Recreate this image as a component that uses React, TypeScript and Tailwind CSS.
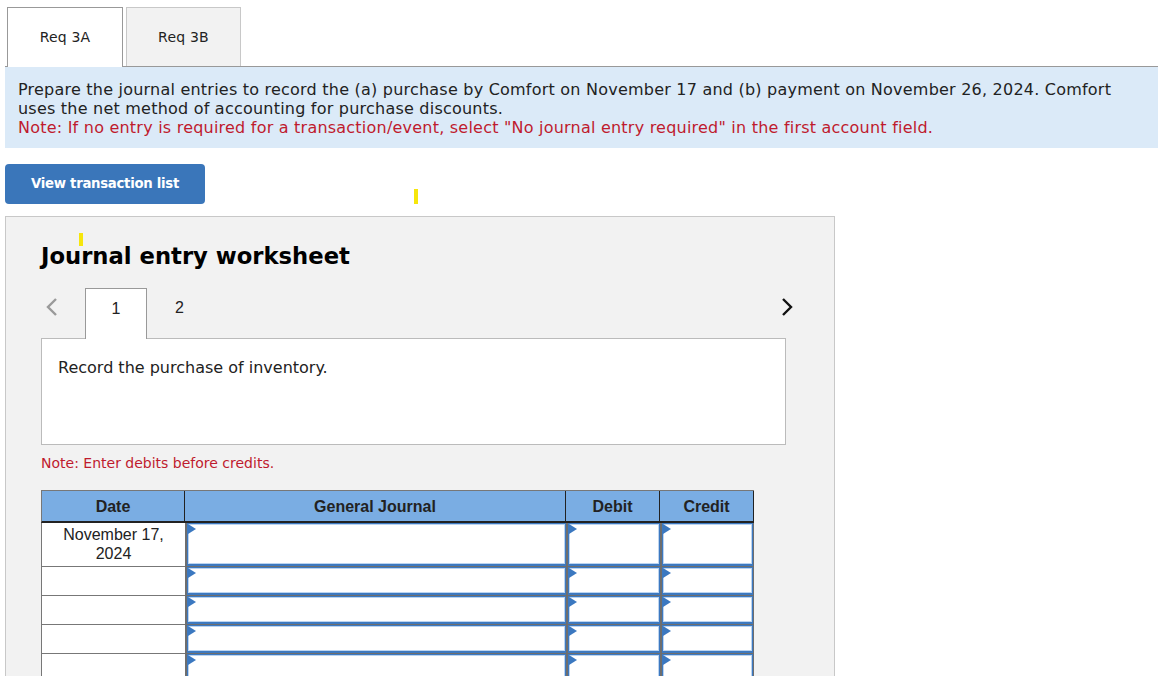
import React from "react";

const Tri = () => (
  <svg className="absolute left-0 top-0" width="8" height="10" viewBox="0 0 8 10">
    <polygon points="0,0 8,5 0,10" fill="#3b78c0" />
  </svg>
);

const InputCell = ({ last }: { last?: boolean }) => (
  <div
    className={`bg-white border-l-2 border-l-[#6e6e6e] border-b border-b-[#6e6e6e] p-0 ${last ? "border-r border-r-[#6e6e6e]" : ""}`}
  >
    <div className="relative h-full border border-[#3d79c0] border-b-2 shadow-[inset_0_0_0_1px_#bcd4f0] bg-white">
      <Tri />
    </div>
  </div>
);

const Row = ({ h, date }: { h: string; date?: React.ReactNode }) => (
  <div className={`grid grid-cols-[144px_381px_94px_94px] ${h}`}>
    <div className="bg-white border-l border-b border-[#777] text-center text-[16px] leading-[19px] pt-[2px] text-[#222] font-['Liberation_Sans',Arial,sans-serif]">
      {date}
    </div>
    <InputCell />
    <InputCell />
    <InputCell last />
  </div>
);

export default function App() {
  return (
    <div className="relative w-[1163px] h-[676px] overflow-hidden bg-white font-['DejaVu_Sans',Verdana,sans-serif] text-[#222]">
      <div className="mx-[5px]">
        {/* Req tabs */}
        <div className="flex items-end pl-[2px] pt-[7px] border-b border-[#999]">
          <div className="relative z-10 -mb-px w-[116px] h-[60px] bg-white border border-[#999] border-b-0 flex items-center justify-center text-[14px] tracking-[0.2px]">
            Req 3A
          </div>
          <div className="ml-[3px] w-[115px] h-[59px] bg-[#f2f2f2] border border-[#c8c8c8] border-b-0 flex items-center justify-center text-[14px] tracking-[0.2px]">
            Req 3B
          </div>
        </div>

        {/* instructions */}
        <div className="bg-[#dbeaf8] px-[13px] pt-[13px] pb-[11px] text-[16px] leading-[19px] tracking-[0.22px]">
          <p>
            Prepare the journal entries to record the (a) purchase by Comfort on November 17 and (b) payment on November 26, 2024. Comfort
            <br />
            uses the net method of accounting for purchase discounts.
          </p>
          <p className="text-[#bf1b2e]">
            Note: If no entry is required for a transaction/event, select "No journal entry required" in the first account field.
          </p>
        </div>

        {/* button */}
        <button className="mt-[16px] w-[200px] h-[40px] rounded-[4px] bg-[#3a76ba] text-white font-bold text-[13.3px] tracking-[-0.3px]">
          View transaction list
        </button>

        {/* worksheet panel */}
        <div className="mt-[12px] w-[830px] h-[480px] bg-[#f2f2f2] border border-[#c8c8c8] pl-[35px] pr-[40px] pt-[25px]">
          <h2 className="text-[22.7px] leading-[28px] font-bold text-black">Journal entry worksheet</h2>

          <div className="mt-[18px] flex items-start justify-between">
            <div className="flex items-start">
              <div className="w-[44px] pt-[9px] pl-[4px]">
                <svg width="13" height="20" viewBox="0 0 13 20">
                  <polyline points="11,2 3,10 11,18" fill="none" stroke="#9a9a9a" strokeWidth="2.4" />
                </svg>
              </div>
              <div className="relative z-10 w-[62px] h-[51px] -mb-px bg-white border border-[#999] border-b-0 text-center pt-[10px] text-[16px] leading-[19px] font-['Liberation_Sans',Arial,sans-serif]">
                1
              </div>
              <div className="w-[65px] text-center pt-[10px] text-[16px] leading-[19px] font-['Liberation_Sans',Arial,sans-serif]">
                2
              </div>
            </div>
            <div className="pt-[9px] pl-[2px]">
              <svg width="13" height="20" viewBox="0 0 13 20">
                <polyline points="2,2 10,10 2,18" fill="none" stroke="#111" strokeWidth="2.4" />
              </svg>
            </div>
          </div>

          <div className="w-[745px] h-[107px] bg-white border border-[#bbb] pl-[16px] pt-[19px] text-[16px] leading-[19px]">
            Record the purchase of inventory.
          </div>

          <p className="mt-[9px] text-[14px] leading-[18px] text-[#bf1b2e]">Note: Enter debits before credits.</p>

          {/* table */}
          <div className="mt-[18px] w-[713px]">
            <div className="grid grid-cols-[144px_381px_94px_94px] h-[33px] bg-[#7aade3] border-t border-[#777] font-['Liberation_Sans',Arial,sans-serif] font-bold text-[16px] text-[#222]">
              <div className="border-l border-l-[#777] border-r border-b-2 border-[#222] flex items-center justify-center pt-[1px]">Date</div>
              <div className="border-r border-b-2 border-[#222] flex items-center justify-center pt-[1px]">General Journal</div>
              <div className="border-r border-b-2 border-[#222] flex items-center justify-center pt-[1px]">Debit</div>
              <div className="border-r border-b-2 border-[#222] flex items-center justify-center pt-[1px]">Credit</div>
            </div>
            <Row
              h="h-[44px]"
              date={
                <>
                  November 17,
                  <br />
                  2024
                </>
              }
            />
            <Row h="h-[29px]" />
            <Row h="h-[29px]" />
            <Row h="h-[29px]" />
            <Row h="h-[29px]" />
          </div>
        </div>
      </div>

      {/* cursor marks */}
      <div className="absolute left-[414px] top-[189px] w-[4px] h-[15px] bg-[#f6e60c]" />
      <div className="absolute left-[79px] top-[233px] w-[4px] h-[13px] bg-[#f6e60c]" />
    </div>
  );
}
